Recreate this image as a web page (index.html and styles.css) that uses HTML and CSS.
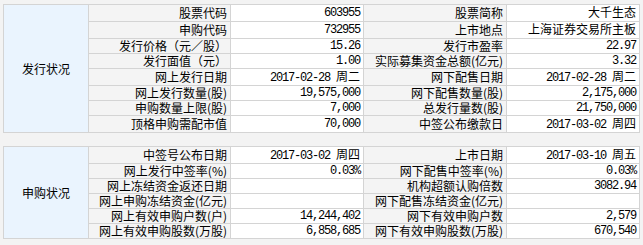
FILE: index.html
```html
<!DOCTYPE html>
<html lang="zh-CN">
<head>
<meta charset="utf-8">
<title>新股详情</title>
<link rel="stylesheet" href="styles.css">
</head>
<body>
<div class="page">
<table class="grid">
<colgroup><col class="c1"><col class="c2"><col class="c3"><col class="c4"><col class="c5"></colgroup>
<tr><td class="sect" rowspan="8">发行状况</td><td class="lbl">股票代码</td><td class="val">603955</td><td class="lbl">股票简称</td><td class="val"><span class="cj">大千生态</span></td></tr>
<tr><td class="lbl">申购代码</td><td class="val">732955</td><td class="lbl">上市地点</td><td class="val"><span class="cj">上海证券交易所主板</span></td></tr>
<tr><td class="lbl">发行价格（元／股）</td><td class="val">15.26</td><td class="lbl">发行市盈率</td><td class="val">22.97</td></tr>
<tr><td class="lbl">发行面值（元）</td><td class="val">1.00</td><td class="lbl">实际募集资金总额(亿元)</td><td class="val">3.32</td></tr>
<tr><td class="lbl">网上发行日期</td><td class="val">2017-02-28 <span class="cj">周二</span></td><td class="lbl">网下配售日期</td><td class="val">2017-02-28 <span class="cj">周二</span></td></tr>
<tr><td class="lbl">网上发行数量(股)</td><td class="val">19,575,000</td><td class="lbl">网下配售数量(股)</td><td class="val">2,175,000</td></tr>
<tr><td class="lbl">申购数量上限(股)</td><td class="val">7,000</td><td class="lbl">总发行量数(股)</td><td class="val">21,750,000</td></tr>
<tr><td class="lbl">顶格申购需配市值</td><td class="val">70,000</td><td class="lbl">中签公布缴款日</td><td class="val">2017-03-02 <span class="cj">周四</span></td></tr>
</table>
<table class="grid second">
<colgroup><col class="c1"><col class="c2"><col class="c3"><col class="c4"><col class="c5"></colgroup>
<tr><td class="sect" rowspan="6">申购状况</td><td class="lbl">中签号公布日期</td><td class="val">2017-03-02 <span class="cj">周四</span></td><td class="lbl">上市日期</td><td class="val">2017-03-10 <span class="cj">周五</span></td></tr>
<tr><td class="lbl">网上发行中签率(%)</td><td class="val">0.03%</td><td class="lbl">网下配售中签率(%)</td><td class="val">0.03%</td></tr>
<tr><td class="lbl">网上冻结资金返还日期</td><td class="val"></td><td class="lbl">机构超额认购倍数</td><td class="val">3082.94</td></tr>
<tr><td class="lbl">网上申购冻结资金(亿元)</td><td class="val"></td><td class="lbl">网下配售冻结资金(亿元)</td><td class="val"></td></tr>
<tr><td class="lbl">网上有效申购户数(户)</td><td class="val">14,244,402</td><td class="lbl">网下有效申购户数</td><td class="val">2,579</td></tr>
<tr><td class="lbl">网上有效申购股数(万股)</td><td class="val">6,858,685</td><td class="lbl">网下有效申购股数(万股)</td><td class="val">670,540</td></tr>
</table>
</div>
</body>
</html>
```
FILE: styles.css
```css
html, body {
  margin: 0;
  padding: 0;
  background: #f3f3f3;
}
.page {
  padding: 4px 0 0 3px;
  font-family: "Noto Sans CJK SC", sans-serif;
  font-size: 12px;
  color: #000;
}
.grid {
  border-collapse: collapse;
  table-layout: fixed;
  width: 636px;
}
.second {
  margin-top: 13px;
  border-bottom: 1px solid #d4d4d4;
}
.c1 { width: 85px; }
.c2 { width: 142px; }
.c3 { width: 133px; }
.c4 { width: 143px; }
.c5 { width: 133px; }
.grid td {
  border: 1px solid #d4d4d4;
  height: 15px;
  padding: 0 3px;
  line-height: 14px;
  white-space: nowrap;
  overflow: hidden;
  box-sizing: border-box;
}
.sect {
  background: #eaf4fe;
  text-align: center;
}
.lbl {
  background: #f4f4f4;
  text-align: right;
}
.val {
  background: #fff;
  text-align: right;
  font-family: "Liberation Mono", monospace;
  letter-spacing: -1.2px;
}
.cj {
  font-family: "Noto Sans CJK SC", sans-serif;
  letter-spacing: 0;
}
```
